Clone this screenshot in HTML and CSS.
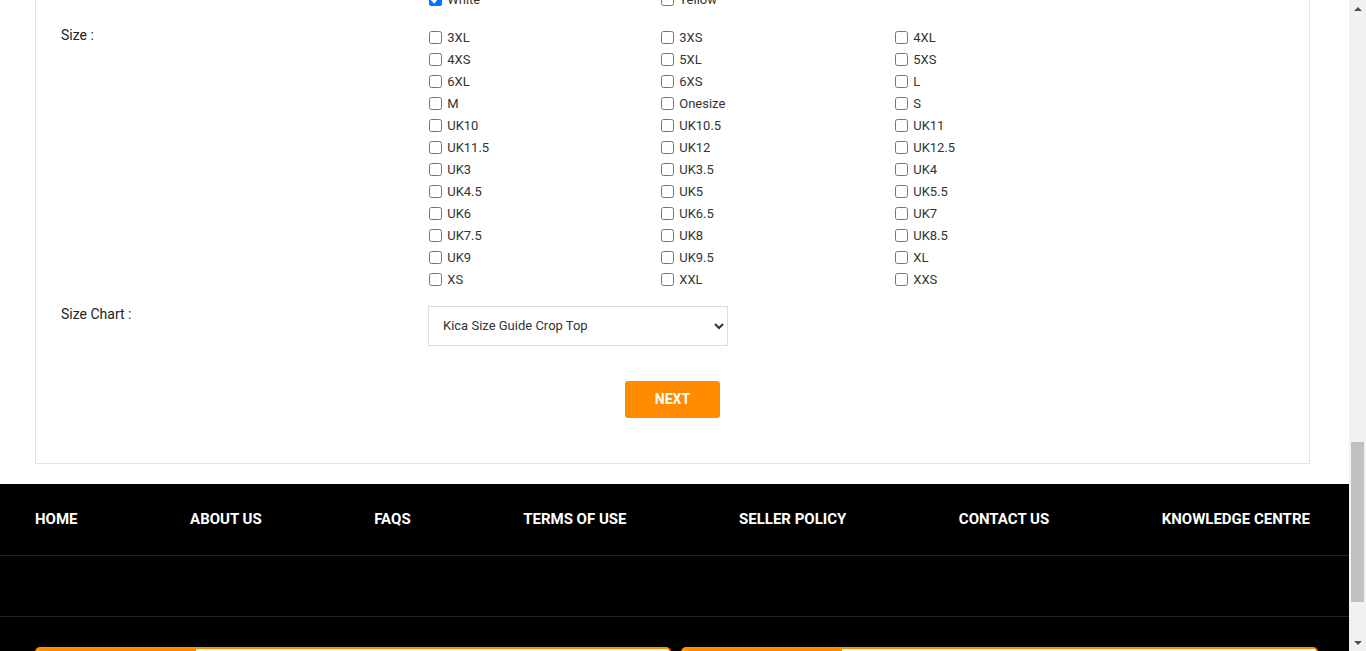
FILE: index.html
```html
<!DOCTYPE html>
<html lang="en">
<head>
<meta charset="utf-8">
<title>Add Product</title>
<link rel="stylesheet" href="styles.css">
</head>
<body>
<div class="viewport">
  <div class="page">
    <div class="card">
      <div class="form-row colour-row">
        <div class="form-label"></div>
        <div class="options">
          <label class="opt"><input type="checkbox" checked> White</label>
          <label class="opt"><input type="checkbox"> Yellow</label>
        </div>
      </div>

      <div class="form-row">
        <div class="form-label form-label-size">Size :</div>
        <div class="options">
          <label class="opt"><input type="checkbox"> 3XL</label>
          <label class="opt"><input type="checkbox"> 3XS</label>
          <label class="opt"><input type="checkbox"> 4XL</label>
          <label class="opt"><input type="checkbox"> 4XS</label>
          <label class="opt"><input type="checkbox"> 5XL</label>
          <label class="opt"><input type="checkbox"> 5XS</label>
          <label class="opt"><input type="checkbox"> 6XL</label>
          <label class="opt"><input type="checkbox"> 6XS</label>
          <label class="opt"><input type="checkbox"> L</label>
          <label class="opt"><input type="checkbox"> M</label>
          <label class="opt"><input type="checkbox"> Onesize</label>
          <label class="opt"><input type="checkbox"> S</label>
          <label class="opt"><input type="checkbox"> UK10</label>
          <label class="opt"><input type="checkbox"> UK10.5</label>
          <label class="opt"><input type="checkbox"> UK11</label>
          <label class="opt"><input type="checkbox"> UK11.5</label>
          <label class="opt"><input type="checkbox"> UK12</label>
          <label class="opt"><input type="checkbox"> UK12.5</label>
          <label class="opt"><input type="checkbox"> UK3</label>
          <label class="opt"><input type="checkbox"> UK3.5</label>
          <label class="opt"><input type="checkbox"> UK4</label>
          <label class="opt"><input type="checkbox"> UK4.5</label>
          <label class="opt"><input type="checkbox"> UK5</label>
          <label class="opt"><input type="checkbox"> UK5.5</label>
          <label class="opt"><input type="checkbox"> UK6</label>
          <label class="opt"><input type="checkbox"> UK6.5</label>
          <label class="opt"><input type="checkbox"> UK7</label>
          <label class="opt"><input type="checkbox"> UK7.5</label>
          <label class="opt"><input type="checkbox"> UK8</label>
          <label class="opt"><input type="checkbox"> UK8.5</label>
          <label class="opt"><input type="checkbox"> UK9</label>
          <label class="opt"><input type="checkbox"> UK9.5</label>
          <label class="opt"><input type="checkbox"> XL</label>
          <label class="opt"><input type="checkbox"> XS</label>
          <label class="opt"><input type="checkbox"> XXL</label>
          <label class="opt"><input type="checkbox"> XXS</label>
        </div>
      </div>

      <div class="form-row">
        <div class="form-label">Size Chart :</div>
        <div class="field">
          <select class="select">
            <option>Kica Size Guide Crop Top</option>
          </select>
        </div>
      </div>

      <div class="actions">
        <button class="btn-next" type="button">NEXT</button>
      </div>
    </div>

    <footer class="footer">
      <nav class="footer-nav">
        <a href="#">HOME</a>
        <a href="#">ABOUT US</a>
        <a href="#">FAQS</a>
        <a href="#">TERMS OF USE</a>
        <a href="#">SELLER POLICY</a>
        <a href="#">CONTACT US</a>
        <a href="#">KNOWLEDGE CENTRE</a>
      </nav>
      <div class="footer-band"></div>
      <div class="footer-boxes">
        <div class="fbox"><span class="fbox-tab"></span><span class="fbox-field"></span></div>
        <div class="fbox"><span class="fbox-tab"></span><span class="fbox-field"></span></div>
      </div>
    </footer>
  </div>

  <div class="scrollbar">
    <div class="sb-btn"><span class="arrow-up"></span></div>
    <div class="sb-track"><div class="sb-thumb"></div></div>
    <div class="sb-btn"><span class="arrow-down"></span></div>
  </div>
</div>
</body>
</html>
```

FILE: styles.css
```css
html, body {
  margin: 0;
  padding: 0;
  height: 651px;
  overflow: hidden;
  background: #fff;
  font-family: Roboto, "Liberation Sans", Arial, sans-serif;
  color: #333;
}

.viewport {
  display: flex;
  height: 651px;
}

.page {
  flex: 1;
  min-width: 0;
  overflow: hidden;
}

/* ---------- form card ---------- */
.card {
  margin: 0 39px 0 35px;
  border: 1px solid #e3e3e3;
  border-top: none;
  padding: 0 0 45px 25px;
}

.form-row {
  display: grid;
  grid-template-columns: 367px 1fr;
  margin-top: 16px;
}

.colour-row {
  margin-top: -12px;
}

.form-label {
  font-size: 14px;
  line-height: 17px;
  color: #222;
}

.form-label-size {
  line-height: 19px;
}

.options {
  display: grid;
  grid-template-columns: 232px 234px 233px;
}

.opt {
  display: flex;
  align-items: center;
  height: 22px;
  font-size: 13px;
  color: #333;
  white-space: pre;
}

.opt input {
  width: 13px;
  height: 13px;
  margin: 0 2px 0 1px;
}

.select {
  width: 300px;
  height: 40px;
  border: 1px solid #ddd;
  border-radius: 0;
  background: #fff;
  padding: 0 8px 1px 10px;
  font-family: Roboto, "Liberation Sans", Arial, sans-serif;
  font-size: 13px;
  color: #333;
}

.actions {
  display: flex;
  justify-content: center;
  margin: 35px 0 0 -25px;
}

.btn-next {
  width: 95px;
  height: 37px;
  border: none;
  border-radius: 3px;
  background: #ff8c00;
  color: #fff;
  font-family: Roboto, "Liberation Sans", Arial, sans-serif;
  font-weight: 700;
  font-size: 14px;
  padding: 0 0 1px;
  cursor: pointer;
}

/* ---------- footer ---------- */
.footer {
  margin-top: 20px;
  background: #000;
}

.footer-nav {
  display: flex;
  justify-content: space-between;
  align-items: center;
  height: 72px;
  box-sizing: border-box;
  padding: 0 39px 2px 35px;
  border-bottom: 1px solid #222;
}

.footer-nav a {
  color: #fff;
  text-decoration: none;
  font-weight: 700;
  font-size: 15px;
  letter-spacing: 0;
}

.footer-band {
  height: 60px;
  border-bottom: 1px solid #222;
}

.footer-boxes {
  display: grid;
  grid-template-columns: 636px 637px;
  gap: 10px;
  padding: 30px 0 20px 35px;
}

.fbox {
  display: flex;
  height: 40px;
  border: 2px solid #ff8c00;
  border-radius: 5px;
  overflow: hidden;
  background: #fff;
}

.fbox-tab {
  width: 159px;
  background: #ff8c00;
}

.fbox-field {
  flex: 1;
  background: #fff;
  border-radius: 5px 0 0 0;
}

/* ---------- scrollbar ---------- */
.scrollbar {
  width: 17px;
  background: #f1f1f1;
  display: flex;
  flex-direction: column;
}

.sb-btn {
  height: 17px;
  display: flex;
  align-items: center;
  justify-content: center;
}

.arrow-up {
  width: 0;
  height: 0;
  border-left: 4px solid transparent;
  border-right: 4px solid transparent;
  border-bottom: 4px solid #505050;
}

.arrow-down {
  width: 0;
  height: 0;
  border-left: 4px solid transparent;
  border-right: 4px solid transparent;
  border-top: 4px solid #505050;
}

.sb-track {
  flex: 1;
  padding: 0 2px;
}

.sb-thumb {
  margin-top: 425px;
  height: 160px;
  background: #c1c1c1;
}
```
